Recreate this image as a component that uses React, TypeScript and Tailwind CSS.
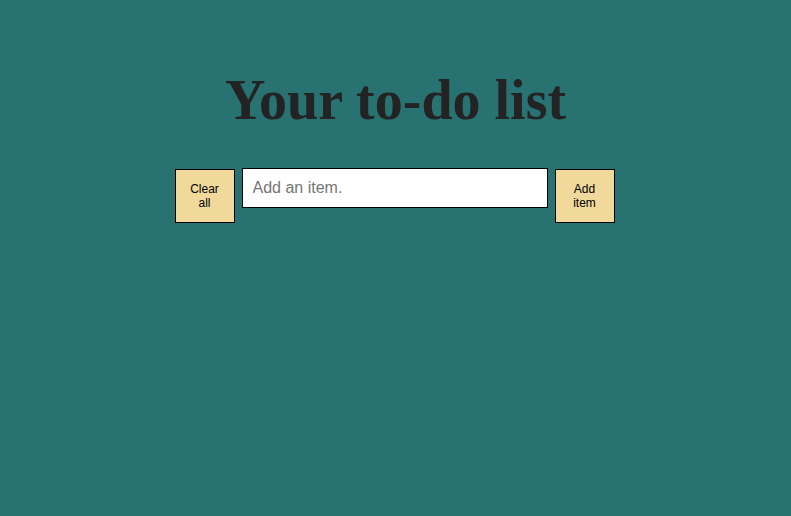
import { useState } from "react";

export default function App() {
  const [text, setText] = useState("");

  return (
    <div className="min-h-[516px] bg-[#287371] pt-[64px] font-['Liberation_Sans',Arial,sans-serif]">
      <h1 className="text-center font-['Liberation_Serif','Times_New_Roman',serif] text-[56px] font-bold leading-[72px] text-[#232323]">
        Your to-do list
      </h1>

      <div className="mt-[32px] flex items-baseline justify-center gap-[7px] pr-[2px]">
        <button className="h-[54px] w-[60px] border border-black bg-[#f0d99b] text-[12px] leading-[14px] text-black">
          Clear
          <br />
          all
        </button>
        <input
          value={text}
          onChange={(e) => setText(e.target.value)}
          placeholder="Add an item."
          className="h-[40px] w-[306px] border border-black bg-white px-[10px] text-[16px] text-black placeholder:text-[#757575]"
        />
        <button className="h-[54px] w-[60px] border border-black bg-[#f0d99b] text-[12px] leading-[14px] text-black">
          Add
          <br />
          item
        </button>
      </div>
    </div>
  );
}
